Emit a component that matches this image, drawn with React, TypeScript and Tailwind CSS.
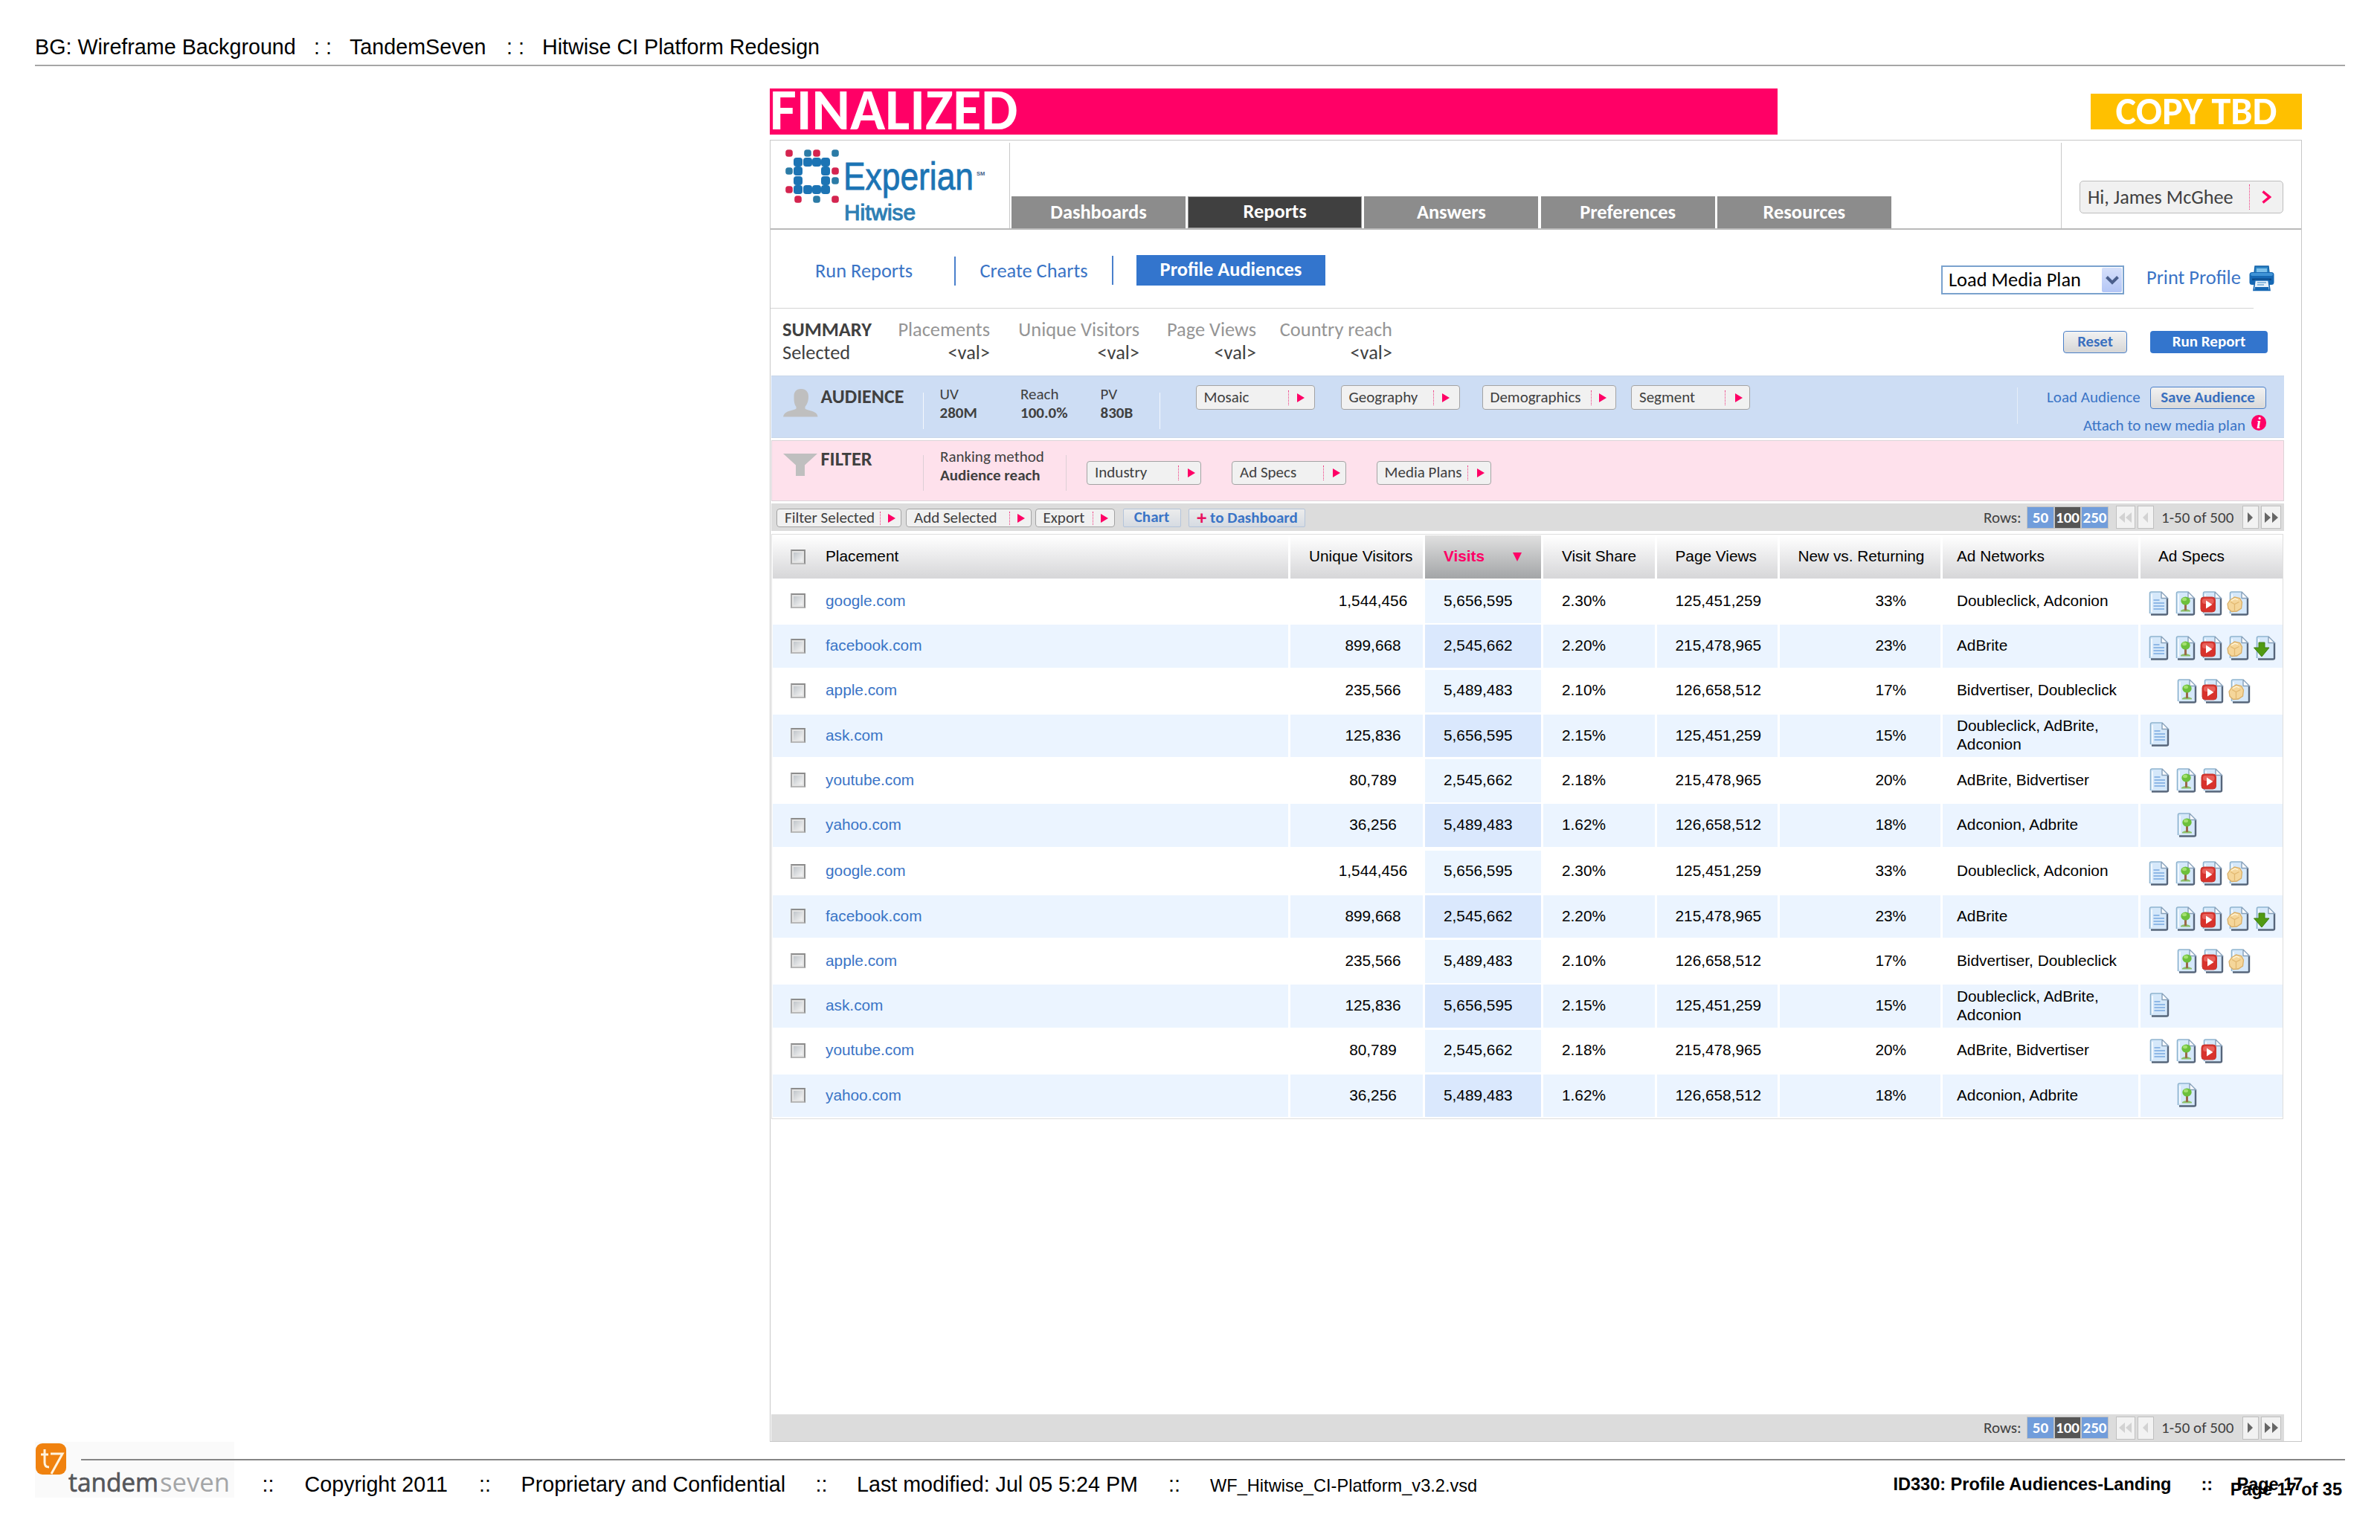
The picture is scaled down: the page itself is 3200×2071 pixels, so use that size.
import React from 'react';

const CALIBRI = "font-['Carlito','Calibri','Lato',sans-serif]";

/* ---------- logos and icons ---------- */

const BLUE = '#1c74b4';
const TEAL = '#2b7ba6';
const RED = '#d4244f';

const smallDots: [number, number, string][] = [
  [25, 17, RED], [50, 17, TEAL], [62, 17, RED], [87, 17, TEAL],
  [25, 41, TEAL], [87, 41, RED], [87, 54, TEAL],
  [25, 66, RED], [37, 79, RED], [62, 79, TEAL], [87, 79, RED],
];
const bigDots: [number, number][] = [
  [37, 29], [50, 29], [62, 29], [74, 29], [37, 41], [74, 41], [37, 54], [74, 54], [37, 66], [50, 66], [62, 66], [74, 66],
];

function ExperianLogo() {
  return (
    <svg width="321" height="118" viewBox="0 0 321 118">
      {smallDots.map(([x, y, c]) => (
        <rect key={`${x}-${y}`} x={x - 4.8} y={y - 4.8} width="9.6" height="9.6" rx="3.5" fill={c} />
      ))}
      {bigDots.map(([x, y]) => (
        <rect key={`${x}-${y}`} x={x - 6} y={y - 6} width="12" height="12" rx="4" fill={BLUE} />
      ))}
      <text x="98" y="66" fontSize="51.5" fontFamily="Liberation Sans" fill={BLUE} stroke={BLUE} strokeWidth="0.8" textLength="175" lengthAdjust="spacingAndGlyphs">Experian</text>
      <text x="277" y="47" fontSize="7.5" fontFamily="Liberation Sans" fontWeight="700" fill="#3f5f8a">SM</text>
      <text x="99" y="107" fontSize="28.6" fontFamily="Liberation Sans" fill="#2f7fb4" stroke="#2f7fb4" strokeWidth="1.1" textLength="96" lengthAdjust="spacingAndGlyphs">Hitwise</text>
    </svg>
  );
}

function TandemLogo() {
  return (
    <svg width="268" height="75" viewBox="0 0 268 75" className="shrink-0 bg-[#fafafa]">
      <rect x="1" y="2" width="41" height="42" rx="9" fill="#f0820f" />
      <path d="M13 10v18q0 6 6 6M8 17h10" fill="none" stroke="#fff3df" strokeWidth="3" />
      <path d="M21 16h16L22 43" fill="none" stroke="#fff3df" strokeWidth="3" />
      <text x="45" y="66.5" fontSize="35" fontFamily="Open Sans" fontWeight="400" fill="#55565a" stroke="#55565a" strokeWidth="0.7" textLength="121" lengthAdjust="spacingAndGlyphs">tandem</text>
      <text x="168" y="66.5" fontSize="35" fontFamily="Open Sans" fontWeight="400" fill="#a3a5a7" textLength="94" lengthAdjust="spacingAndGlyphs">seven</text>
    </svg>
  );
}

function Printer() {
  return (
    <svg width="36" height="36" viewBox="0 0 36 36">
      <path d="M9 2h18l1 9H8z" fill="#2f86c6" stroke="#0f5fa6" strokeWidth="1.4" />
      <path d="M11 5h14v5H11z" fill="#7fc0ea" />
      <rect x="1.5" y="10" width="33" height="17" rx="3.5" fill="#1668b4" />
      <rect x="3" y="11" width="30" height="4" rx="2" fill="#3f93d6" />
      <rect x="5" y="18.5" width="26" height="2.5" fill="#0b4a8a" />
      <path d="M9 21h18l2 13.500H7z" fill="#e8f3fb" stroke="#1668b4" strokeWidth="1.6" />
      <path d="M12 24h12M12 27h9" stroke="#6fa9d6" strokeWidth="1.6" />
      <path d="M9 30h18l.8 4H8.200z" fill="#1668b4" />
    </svg>
  );
}

function Person() {
  return (
    <svg width="47" height="38" viewBox="0 0 47 38" fill="#bfbfbf">
      <path d="M24 0c7 0 10 4.500 10 10 0 7-2 11-4.500 14v2.500c2 2 8 2.500 12 4.500 3.500 1.800 4.500 3.500 5 6.500H0c.5-3 2-4.700 5-6.500 4-2 10-2.500 12.500-4.500V24C15 21 14.500 17 14.500 10 14.500 4.500 17 0 24 0z" />
    </svg>
  );
}

function Funnel() {
  return (
    <svg width="46" height="31" viewBox="0 0 46 31" fill="#bfbfbf">
      <path d="M0 0h46L29 15.500V30H17V15.500z" />
    </svg>
  );
}

type IconName = 'text' | 'image' | 'video' | 'rich' | 'download';

function SpecIcon({ name }: { name: IconName }) {
  return (
    <svg width="30" height="33" viewBox="-3 0 30 33">
      <path d="M1.500 2.500q0-1.500 1.500-1.500h13.500l8.500 8v20.500q0 2-2 2H3.500q-2 0-2-2z" fill="#d5e8fa" />
      <path d="M1.500 30V3q0-2 2-2h13" fill="none" stroke="#8fb4cf" strokeWidth="1.6" />
      <path d="M4 4v24" stroke="#f3f9ff" strokeWidth="2" />
      <path d="M25 9v21q0 1.500-2 1.500H3" fill="none" stroke="#56657a" strokeWidth="2.4" />
      <path d="M17 1v8.500h8.500z" fill="#fbfdff" stroke="#86a0ba" strokeWidth="1.4" strokeLinejoin="round" />
      {name === 'text' && <path d="M6.500 12h8M6.500 16h14.500M6.500 20h14.500M6.500 24h14.500" stroke="#8fb8e6" strokeWidth="2" />}
      {name === 'image' && (
        <>
          <path d="M7 26q6-4 13 0v1.500H7z" fill="#8cc068" />
          <path d="M13.500 15v11" stroke="#9a6a4a" strokeWidth="3" />
          <ellipse cx="13.500" cy="13" rx="6.200" ry="5.500" fill="#6cc03c" />
          <ellipse cx="12" cy="11" rx="3" ry="2.200" fill="#a4e070" />
        </>
      )}
      {name === 'video' && (
        <>
          <rect x="-2" y="8" width="19.500" height="20" rx="4" fill="#d8322c" stroke="#c23a32" strokeWidth="1" />
          <rect x="0" y="10" width="15.500" height="7" rx="3" fill="#e8605a" />
          <path d="M5 12.500l8.500 5.500L5 23.500z" fill="#fff" />
        </>
      )}
      {name === 'rich' && (
        <>
          <path d="M-2 17l3.500-5 6-4 7 1.500 3 5.500-1 8-6 4-7 .5-4.500-4z" fill="#f5d69a" stroke="#d9ae66" strokeWidth="1.3" />
          <path d="M2 14.500l5.500 3 6-3M7.500 17.500V26" stroke="#e2b870" strokeWidth="1.3" fill="none" />
          <path d="M3 12.500l5-2.500 4 1.500" stroke="#fff2d2" strokeWidth="1.6" fill="none" />
        </>
      )}
      {name === 'download' && <path d="M4 9h8v7h6L8 28-2.500 16H4z" fill="#4f9a12" stroke="#3f7f10" strokeWidth="1" />}
    </svg>
  );
}

/* ---------- small controls ---------- */

function Tri() {
  return (
    <svg width="10" height="12" viewBox="0 0 10 12" fill="#ff0066">
      <path d="M0 0l10 6-10 6z" />
    </svg>
  );
}

function Pill({ label, box, zone }: { label: string; box: string; zone: string }) {
  return (
    <div className={`flex items-center justify-between overflow-hidden rounded-[4px] border border-[#a3a3a3] bg-[#f1f1f1] text-[21px] leading-6 text-[#404040] ${box}`}>
      <span className="whitespace-nowrap pb-px pl-[10px]">{label}</span>
      <span className={`flex shrink-0 items-center border-l border-dotted border-[#f0377f] ${zone}`}>
        <Tri />
      </span>
    </div>
  );
}

function Pager() {
  const size = 'flex h-[30px] items-center justify-center border border-[#c4c4c4] text-[21px] font-bold leading-6 text-white';
  const btn = 'flex h-[31px] items-center justify-center border border-[#c0c0c0] bg-[#f2f2f2]';
  return (
    <div className={`flex items-center text-[21px] leading-6 text-[#404040] ${CALIBRI}`}>
      <span className="w-[58px]">Rows:</span>
      <span className={`w-[37px] bg-[#719ddb] ${size}`}>50</span>
      <span className={`w-[36px] bg-[#555555] ${size}`}>100</span>
      <span className={`w-[37px] bg-[#719ddb] ${size}`}>250</span>
      <span className={`ml-[10px] w-[26px] ${btn}`}>
        <svg width="18" height="14" viewBox="0 0 18 14" fill="#d2d2d2"><path d="M8 0v14L0 7zM17 0v14L9 7z" /></svg>
      </span>
      <span className={`ml-[3px] w-[22px] ${btn}`}>
        <svg width="8" height="14" viewBox="0 0 8 14" fill="#d2d2d2"><path d="M7 0v14L0 7z" /></svg>
      </span>
      <span className="ml-[10px] w-[109px]">1-50 of 500</span>
      <span className={`w-[22px] ${btn}`}>
        <svg width="8" height="14" viewBox="0 0 8 14" fill="#666"><path d="M0 0v14l7-7z" /></svg>
      </span>
      <span className={`ml-[3px] w-[27px] ${btn}`}>
        <svg width="18" height="14" viewBox="0 0 18 14" fill="#666"><path d="M0 0v14l8-7zM10 0v14l8-7z" /></svg>
      </span>
    </div>
  );
}

function Checkbox() {
  return (
    <span className="block size-5 border-2 border-b-[#b8b8b8] border-l-[#a8a8a8] border-r-[#8f8f8f] border-t-[#8c8c8c] bg-[#e4e4e4] p-[2px]">
      <span className="block size-full bg-linear-to-br from-[#c0c5ca] to-[#f4f4f4]" />
    </span>
  );
}

/* ---------- table ---------- */

type Row = { site: string; uv: string; visits: string; share: string; views: string; ret: string; nets: string; icons: (IconName | null)[]; shift: string };

const rows: Row[] = [
  { site: 'google.com', uv: '1,544,456', visits: '5,656,595', share: '2.30%', views: '125,451,259', ret: '33%', nets: 'Doubleclick, Adconion', icons: ['text', 'image', 'video', 'rich'], shift: 'pt-[5px]' },
  { site: 'facebook.com', uv: '899,668', visits: '2,545,662', share: '2.20%', views: '215,478,965', ret: '23%', nets: 'AdBrite', icons: ['text', 'image', 'video', 'rich', 'download'], shift: 'pt-[5px]' },
  { site: 'apple.com', uv: '235,566', visits: '5,489,483', share: '2.10%', views: '126,658,512', ret: '17%', nets: 'Bidvertiser, Doubleclick', icons: [null, 'image', 'video', 'rich'], shift: 'pl-[2px]' },
  { site: 'ask.com', uv: '125,836', visits: '5,656,595', share: '2.15%', views: '125,451,259', ret: '15%', nets: 'Doubleclick, AdBrite, Adconion', icons: ['text'], shift: 'pb-[4px] pl-px' },
  { site: 'youtube.com', uv: '80,789', visits: '2,545,662', share: '2.18%', views: '215,478,965', ret: '20%', nets: 'AdBrite, Bidvertiser', icons: ['text', 'image', 'video'], shift: 'pl-px' },
  { site: 'yahoo.com', uv: '36,256', visits: '5,489,483', share: '1.62%', views: '126,658,512', ret: '18%', nets: 'Adconion, Adbrite', icons: [null, 'image'], shift: 'pb-[2px] pl-[2px]' },
];

const COLS = 'grid grid-cols-[696px_181px_159px_152.5px_165.5px_219px_266px_191px]';

function TableRow({ row, odd }: { row: Row; odd: boolean }) {
  const cell = `mr-[3px] flex items-center pb-[3px] ${odd ? 'bg-[#ebf4ff]' : ''}`;
  return (
    <div className={`h-[57.5px] ${COLS}`}>
      <div className={cell}>
        <span className="ml-6 mt-[2px]"><Checkbox /></span>
        <span className="ml-[27px] text-[#3a74c6]">{row.site}</span>
      </div>
      <div className={`${cell} justify-center pl-11`}>{row.uv}</div>
      <div className={`mr-[3px] flex items-center pb-[3px] pl-[25px] ${odd ? 'bg-[#dae8fd]' : 'bg-[#ecf5ff]'}`}>{row.visits}</div>
      <div className={`${cell} pl-[25px]`}>{row.share}</div>
      <div className={`${cell} pl-[25px]`}>{row.views}</div>
      <div className={`${cell} justify-end pr-[46px]`}>{row.ret}</div>
      <div className={`${cell} pl-[19px] pr-6`}>{row.nets}</div>
      <div className={`flex items-center ${odd ? 'bg-[#ebf4ff]' : ''}`}>
        <div className={`ml-[8px] flex ${row.shift}`}>
          {row.icons.map((n, i) => (
            <span key={i} className="block h-[33px] w-[36px]">{n && <SpecIcon name={n} />}</span>
          ))}
        </div>
      </div>
    </div>
  );
}

function Table() {
  const h = 'mr-[3px] flex items-center bg-linear-to-b from-white to-[#d6d6d8] pb-[2px]';
  return (
    <div className="ml-[1px] mt-[4px] h-[787px] w-[2033px] border border-[#dedede] pl-[1px] pt-[1px] text-[20.8px] leading-[25px] text-black">
      <div className={`h-[57.5px] ${COLS}`}>
        <div className={h}>
          <span className="ml-6 mt-[2px]"><Checkbox /></span>
          <span className="ml-[27px]">Placement</span>
        </div>
        <div className={`${h} whitespace-nowrap pl-[25px]`}>Unique Visitors</div>
        <div className="mr-[3px] flex items-center bg-linear-to-b from-[#e0e0e0] to-[#a3a5a7] pb-[2px] pl-[25px] font-bold text-[#ff0066]">
          Visits
          <svg width="12" height="12" viewBox="0 0 12 12" className="ml-[38px] mt-[2px]" fill="#ff0066"><path d="M0 0h12L6 12z" /></svg>
        </div>
        <div className={`${h} pl-[25px]`}>Visit Share</div>
        <div className={`${h} pl-[25px]`}>Page Views</div>
        <div className={`${h} whitespace-nowrap pl-[24.5px]`}>New vs. Returning</div>
        <div className={`${h} pl-[19px]`}>Ad Networks</div>
        <div className="flex items-center bg-linear-to-b from-white to-[#d6d6d8] pb-[2px] pl-6">Ad Specs</div>
      </div>
      <div className="mt-[2.5px] flex flex-col gap-[2.75px]">
        {rows.map((r, i) => <TableRow key={r.site} row={r} odd={i % 2 === 1} />)}
      </div>
      <div className="mt-[4.75px] flex flex-col gap-[2.75px]">
        {rows.map((r, i) => <TableRow key={r.site} row={r} odd={i % 2 === 1} />)}
      </div>
    </div>
  );
}

/* ---------- page ---------- */

const tabs = ['Dashboards', 'Reports', 'Answers', 'Preferences', 'Resources'];

function TopBar() {
  return (
    <div className="flex h-[120px] border-b-2 border-[#bababa]">
      <ExperianLogo />
      <div className="mt-[3px] w-px bg-[#c8c8c8]" />
      <div className="ml-[2px] flex gap-[3.2px] self-end">
        {tabs.map((t) => (
          <div
            key={t}
            className={
              t === 'Reports'
                ? 'flex h-[43px] w-[234px] items-center justify-center border border-[#9a9a9a] bg-[#404040] pb-[4px] text-[26.4px] font-bold leading-8 text-white'
                : 'flex h-[43px] w-[234px] items-center justify-center bg-[#8c8c8c] pb-px text-[26.4px] font-bold leading-8 text-white'
            }
          >
            {t}
          </div>
        ))}
      </div>
      <div className="ml-auto mt-[3px] flex w-[323px] border-l border-[#c8c8c8]">
        <div className="ml-[24px] mt-[51px] flex h-[44px] w-[274px] items-center rounded-[5px] border border-[#bdbdbd] bg-[#f1f1f1] text-[26.2px] leading-8 text-[#404040]">
          <span className="w-[227px] whitespace-nowrap pb-px pl-[10px]">Hi, James McGhee</span>
          <span className="flex h-[34px] items-center border-l border-dotted border-[#f0377f] pl-[16px]">
            <svg width="13" height="18" viewBox="0 0 13 18" fill="none" stroke="#ff0066" strokeWidth="3.4"><path d="M1.500 1.500L10.500 9l-9 7.500" /></svg>
          </span>
        </div>
      </div>
    </div>
  );
}

function SubNav() {
  return (
    <div className="flex h-[105px] text-[26.4px] leading-8 text-[#3a74c6]">
      <span className="ml-[60px] mt-[38.5px] w-[187px]">Run Reports</span>
      <span className="mt-9 h-[39px] w-[2px] bg-[#4a80cc]" />
      <span className="ml-[32.5px] mt-[38.5px] w-[177.5px]">Create Charts</span>
      <span className="mt-[35px] h-[39px] w-[2px] bg-[#4a80cc]" />
      <span className="ml-[31px] mt-[34px] flex h-[41px] w-[254px] items-center justify-center bg-[#3375cd] pb-[3px] font-bold text-white">Profile Audiences</span>
      <span className="ml-[828px] mt-[48px] flex h-[39px] w-[246px] items-center justify-between border-2 border-[#7aa2cd] bg-white pr-px text-black">
        <span className="pb-px pl-[8px]">Load Media Plan</span>
        <span className="flex h-[33px] w-[27px] items-center justify-center rounded-[2px] bg-linear-to-b from-[#d6e0fa] to-[#b4c6f6]">
          <svg width="18" height="12" viewBox="0 0 18 12" fill="none" stroke="#4a5f8c" strokeWidth="4"><path d="M1.500 1.500L9 9l7.500-7.500" /></svg>
        </span>
      </span>
      <span className="ml-[30px] mt-[48px] w-[137px]">Print Profile</span>
      <span className="mt-[47px]"><Printer /></span>
    </div>
  );
}

function Summary() {
  const cols: [string, string][] = [
    ['Placements', 'w-[151px]'],
    ['Unique Visitors', 'w-[201px]'],
    ['Page Views', 'w-[157px]'],
    ['Country reach', 'w-[183px]'],
  ];
  return (
    <div className="flex h-[90px] text-[26.4px] leading-[31px] text-[#404040]">
      <div className="ml-[16px] mt-[12.5px] w-[128px]">
        <div className="font-bold">SUMMARY</div>
        <div>Selected</div>
      </div>
      {cols.map(([c, w]) => (
        <div key={c} className={`mt-[12.5px] text-right ${w}`}>
          <div className="text-[#959595]">{c}</div>
          <div>&lt;val&gt;</div>
        </div>
      ))}
      <span className="ml-auto mt-[30px] flex h-[30px] w-[86px] items-center justify-center rounded-[4px] border border-[#4a7fc8] bg-linear-to-b from-[#f2f2f2] to-[#d6d6d6] pb-[2px] text-[20.8px] font-bold text-[#3a70bf]">Reset</span>
      <span className="ml-[31px] mr-[45px] mt-[30px] flex h-[30px] w-[158px] items-center justify-center rounded-[4px] bg-[#3375cd] pb-[2px] text-[21px] font-bold text-white">Run Report</span>
    </div>
  );
}

function Stat({ label, value, w }: { label: string; value: string; w: string }) {
  return (
    <div className={`mt-[13px] whitespace-nowrap text-[21px] leading-[25px] ${w}`}>
      <div>{label}</div>
      <div className="font-bold">{value}</div>
    </div>
  );
}

function AudienceBand() {
  return (
    <div className="ml-px flex h-[84px] w-[2034px] border-y border-[#c8d6ea] bg-[#cdddf4] text-[#404040]">
      <span className="ml-[16px] mt-[17px]"><Person /></span>
      <span className="ml-[3.5px] mt-[10.5px] w-[137px] text-[26px] font-bold leading-8">AUDIENCE</span>
      <span className="mt-[22px] h-[49px] w-px bg-[#f4f8fd]" />
      <div className="-mt-px ml-[22px] flex">
        <Stat label="UV" value="280M" w="w-[108.5px]" />
        <Stat label="Reach" value="100.0%" w="w-[107.5px]" />
        <Stat label="PV" value="830B" w="w-[79px]" />
      </div>
      <span className="mt-[22px] h-[49px] w-px bg-[#f4f8fd]" />
      <Pill label="Mosaic" box="ml-[48px] mt-[12px] h-[33px] w-[160px]" zone="h-5 w-[35px] pl-[11px]" />
      <Pill label="Geography" box="ml-[35px] mt-[12px] h-[33px] w-[160px]" zone="h-5 w-[35px] pl-[11px]" />
      <Pill label="Demographics" box="ml-[30px] mt-[12px] h-[33px] w-[180px]" zone="h-5 w-[33px] pl-[10px]" />
      <Pill label="Segment" box="ml-[20.5px] mt-[12px] h-[33px] w-[160px]" zone="h-5 w-[33px] pl-[13px]" />
      <div className="ml-auto mt-[15px] h-[49px] w-[359px] border-l border-[#e6edf8] text-[21px] leading-6 text-[#3a74c6]">
        <div className="flex">
          <span className="ml-[39px] mt-[1px] w-[138.5px] whitespace-nowrap">Load Audience</span>
          <span className="-mt-px flex h-[30px] w-[156px] items-center justify-center rounded-[4px] border border-[#4a7fc8] bg-linear-to-b from-[#f2f2f2] to-[#d9d9d9] pb-[2px] font-bold text-[#3a70bf]">Save Audience</span>
        </div>
        <div className="flex">
          <span className="ml-[88px] mt-[10px] w-[226px] whitespace-nowrap">Attach to new media plan</span>
          <span className="mt-[8px] flex h-[21px] w-[20px] items-center justify-center rounded-full bg-[#ff0066] font-['Liberation_Serif'] text-[20px] font-bold italic leading-none text-white">i</span>
        </div>
      </div>
    </div>
  );
}

function FilterBand() {
  return (
    <div className="ml-px mt-[3px] flex h-[82px] w-[2034px] border border-[#dcd3d8] bg-[#fee1ec] text-[#404040]">
      <span className="ml-[15px] mt-[17px]"><Funnel /></span>
      <span className="ml-[4.5px] mt-[8px] w-[137px] text-[26.4px] font-bold leading-8">FILTER</span>
      <span className="mt-[19px] h-[48px] w-px bg-[#dccfd6]" />
      <div className="-mt-[4.5px] ml-[22.5px]">
        <Stat label="Ranking method" value="Audience reach" w="w-[168.5px]" />
      </div>
      <span className="mt-[19px] h-[48px] w-px bg-[#dccfd6]" />
      <Pill label="Industry" box="ml-[27.5px] mt-[26.5px] h-[32px] w-[154px]" zone="h-5 w-[30px] pl-[12px]" />
      <Pill label="Ad Specs" box="ml-[41px] mt-[26.5px] h-[32px] w-[154px]" zone="h-5 w-[30px] pl-[12px]" />
      <Pill label="Media Plans" box="ml-[40.5px] mt-[26.5px] h-[32px] w-[154.5px]" zone="h-5 w-[31px] pl-[12px]" />
    </div>
  );
}

function ActionBar() {
  const soft = 'mt-[7px] flex h-[25px] items-center justify-center rounded-[2px] border border-[#b4c4da] bg-linear-to-b from-[#ececec] to-[#d6dbe2] text-[21px] font-bold leading-6 text-[#3a74c6]';
  return (
    <div className="ml-px mt-[3px] flex h-[37px] w-[2034px] bg-[#dcdcdc]">
      <Pill label="Filter Selected" box="ml-[7px] mt-[7px] h-[25px] w-[168px]" zone="h-[18px] w-[28.5px] pl-[10px]" />
      <Pill label="Add Selected" box="ml-[6px] mt-[7px] h-[25px] w-[169px]" zone="h-[18px] w-[29px] pl-[10px]" />
      <Pill label="Export" box="ml-[4.5px] mt-[7px] h-[25px] w-[107px]" zone="h-[18px] w-[28.5px] pl-[10px]" />
      <span className={`ml-[11px] w-[78px] pb-[4px] ${soft}`}>Chart</span>
      <span className={`ml-[10px] w-[157px] pb-px pl-[2px] ${soft}`}><span className="mr-[5px] text-[26px] leading-5 text-[#e8125f]">+</span>to Dashboard</span>
      <div className="ml-auto mr-[4px] flex"><Pager /></div>
    </div>
  );
}

export default function App() {
  return (
    <div className="h-[2071px] w-[3200px] overflow-hidden bg-white font-['Liberation_Sans',Arial,sans-serif] text-black">
      <header className="ml-[47px] flex h-[89px] w-[3106px] whitespace-pre border-b-2 border-[#a6a6a6] pt-[43px] text-[28.7px] leading-10">
        <span className="w-[375px]">BG: Wireframe Background</span>
        <span className="w-[48px]">: :</span>
        <span className="w-[211px]">TandemSeven</span>
        <span className="w-[48px]">: :</span>
        <span>Hitwise CI Platform Redesign</span>
      </header>

      <main className={`ml-[1035px] w-[2060px] ${CALIBRI}`}>
        <div className="mt-[30px] flex h-[62px] justify-between font-bold text-white">
          <div className="flex w-[1355px] items-center bg-[#ff0066] text-[78px] leading-[62px]"><span className="pb-[5px]">FINALIZED</span></div>
          <div className="mt-[7px] flex h-[48px] w-[284px] items-center justify-center bg-[#ffc000] text-[52.2px] leading-[48px]"><span className="pb-[3px]">COPY TBD</span></div>
        </div>

        <div className="mt-[7px] flex h-[1751px] flex-col border border-[#c8c8c8]">
          <TopBar />
          <SubNav />
          <div className="h-px w-[1994px] shrink-0 bg-[#d4d4d4]" />
          <Summary />
          <AudienceBand />
          <FilterBand />
          <ActionBar />
          <div className="font-['Liberation_Sans',Arial,sans-serif]"><Table /></div>
          <div className="ml-px mt-auto flex h-[36px] w-[2034px] bg-[#dcdcdc]">
            <div className="ml-auto mr-[4px] flex"><Pager /></div>
          </div>
        </div>
      </main>

      <footer className="relative ml-[47px] flex w-[3106px] whitespace-nowrap text-[28.7px] leading-10">
        <div className="absolute left-[62px] right-0 top-[23px] h-[2px] bg-[#858585]" />
        <TandemLogo />
        <span className="ml-[37.5px] mt-[37px] w-[57px]">::</span>
        <span className="mt-[37px] w-[234.5px]">Copyright 2011</span>
        <span className="mt-[37px] w-[56.5px]">::</span>
        <span className="mt-[37px] w-[396px]">Proprietary and Confidential</span>
        <span className="mt-[37px] w-[55.5px]">::</span>
        <span className="mt-[37px] w-[419px]">Last modified: Jul 05 5:24 PM</span>
        <span className="mt-[37px] w-[56px]">::</span>
        <span className="mt-[38.5px] w-[918.5px] text-[23.6px]">WF_Hitwise_CI-Platform_v3.2.vsd</span>
        <span className="mt-[37px] w-[414px] text-[23.5px] font-bold">ID330: Profile Audiences-Landing</span>
        <span className="mt-[37px] w-[48px] text-[23.5px] font-bold">::</span>
        <span className="mt-[37px] text-[23.5px] font-bold">Page 17</span>
        <span className="absolute right-[4px] top-[44px] text-[23.5px] font-bold">Page 17 of 35</span>
      </footer>
    </div>
  );
}
